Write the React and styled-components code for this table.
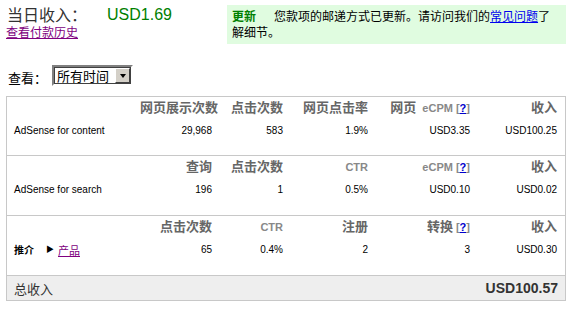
import styled, { createGlobalStyle } from 'styled-components';

const GlobalStyle = createGlobalStyle`
  body {
    margin: 0;
    background: #fff;
    font-family: "Liberation Sans", "Noto Sans CJK SC", sans-serif;
    color: #000;
  }
`;

const Page = styled.div`
  width: 572px;
  padding: 5px 6px 0 6px;
  box-sizing: border-box;
`;

const TopBar = styled.div`
  display: flex;
  justify-content: space-between;
  align-items: flex-start;
`;

const Earnings = styled.div`
  display: flex;
  flex-direction: column;
  padding-left: 1px;
`;

const TitleLine = styled.div`
  display: flex;
  align-items: center;
  height: 19px;
`;

const Title = styled.span`
  font-family: "Noto Sans CJK SC", sans-serif;
  font-size: 16px;
  line-height: 19px;
  color: #333;
  width: 100px;
`;

const Amount = styled.span`
  font-family: "Liberation Sans", sans-serif;
  font-size: 16px;
  line-height: 19px;
  color: #008000;
`;

const HistoryLink = styled.a`
  font-family: "Noto Sans CJK SC", sans-serif;
  font-size: 12px;
  line-height: 15px;
  color: #800080;
  text-decoration: underline;
  margin-left: -1px;
`;

const Notice = styled.div`
  width: 339px;
  height: 39px;
  box-sizing: border-box;
  background: #e0fce0;
  padding: 3px 6px 0 5px;
  font-family: "Noto Sans CJK SC", sans-serif;
  font-size: 12px;
  line-height: 16px;
`;

const NoticeTag = styled.b`
  color: #008000;
  margin-right: 18px;
`;

const BlueLink = styled.a`
  color: #0000ee;
  text-decoration: underline;
`;

const FilterRow = styled.div`
  display: flex;
  align-items: center;
  gap: 5px;
  margin-top: 21px;
  padding-left: 2px;
  font-family: "Noto Sans CJK SC", sans-serif;
  font-size: 13px;
`;

const FilterLabel = styled.span`
  line-height: 17px;
  padding-top: 4px;
`;

const FakeSelect = styled.div`
  display: flex;
  align-items: center;
  width: 81px;
  height: 21px;
  box-sizing: border-box;
  border: 2px solid;
  border-color: #808080 #fff #fff #808080;
  outline: 1px solid #404040;
  outline-offset: -3px;
  background: #fff;
`;

const SelectText = styled.span`
  flex: 1;
  padding-left: 3px;
  font-size: 13px;
  line-height: 17px;
`;

const SelectButton = styled.span`
  width: 15px;
  height: 15px;
  margin-right: 1px;
  background: #d4d0c8;
  border: 1px solid;
  border-color: #fff #404040 #404040 #fff;
  box-sizing: border-box;
  display: flex;
  align-items: center;
  justify-content: center;

  &::after {
    content: '';
    border-left: 3.5px solid transparent;
    border-right: 3.5px solid transparent;
    border-top: 4px solid #000;
  }
`;

const Report = styled.div`
  margin-top: 10px;
  border: 1px solid #c8c8c8;
`;

const Section = styled.div`
  display: grid;
  grid-template-columns: 126px 72px 71px 85px 102px 87px;
  grid-template-rows: 16px 14px;
  row-gap: 9px;
  padding: 2px 7px ${(p) => (p.$first ? 17 : 18)}px 7px;
  border-top: ${(p) => (p.$first ? 'none' : '1px solid #c8c8c8')};
`;

const Head = styled.div`
  text-align: right;
  font-family: "Noto Sans CJK SC", sans-serif;
  font-size: 13px;
  font-weight: bold;
  line-height: 16px;
  color: #666;
  white-space: nowrap;
`;

const Latin = styled.span`
  font-family: "Liberation Sans", sans-serif;
  font-size: 11px;
  font-weight: bold;
  color: #888;
  margin-left: ${(p) => p.$gap || 0}px;
`;

const HelpLink = styled.a`
  font-family: "Liberation Sans", sans-serif;
  font-size: 11px;
  font-weight: bold;
  color: #0000cc;
  text-decoration: underline;
`;

const Cell = styled.div`
  font-size: 10px;
  line-height: 14px;
  white-space: nowrap;
  display: flex;
  align-items: center;
  justify-content: ${(p) => (p.$left ? 'flex-start' : 'flex-end')};
`;

const ReferLabel = styled.b`
  font-family: "Noto Sans CJK SC", sans-serif;
  font-size: 10px;
  margin-right: 12px;
`;

const Arrow = styled.span`
  font-size: 8px;
  margin-right: 4px;
`;

const ProductLink = styled.a`
  font-family: "Noto Sans CJK SC", sans-serif;
  font-size: 11px;
  color: #800080;
  text-decoration: underline;
`;

const TotalRow = styled.div`
  display: flex;
  justify-content: space-between;
  align-items: center;
  height: 24px;
  padding: 0 7px;
  background: #eee;
  border-top: 1px solid #c8c8c8;
`;

const TotalLabel = styled.span`
  font-family: "Noto Sans CJK SC", sans-serif;
  font-size: 13px;
  color: #333;
`;

const TotalValue = styled.span`
  font-size: 14px;
  font-weight: bold;
  color: #333;
`;

const Help = () => (
  <>
    <Latin $gap={3}>[</Latin>
    <HelpLink href="#">?</HelpLink>
    <Latin>]</Latin>
  </>
);

const sections = [
  {
    heads: [
      '网页展示次数',
      '点击次数',
      '网页点击率',
      <>网页<Latin $gap={6}>eCPM</Latin><Help /></>,
      '收入',
    ],
    label: 'AdSense for content',
    values: ['29,968', '583', '1.9%', 'USD3.35', 'USD100.25'],
  },
  {
    heads: ['查询', '点击次数', <Latin>CTR</Latin>, <><Latin>eCPM</Latin><Help /></>, '收入'],
    label: 'AdSense for search',
    values: ['196', '1', '0.5%', 'USD0.10', 'USD0.02'],
  },
  {
    heads: ['点击次数', <Latin>CTR</Latin>, '注册', <>转换<Help /></>, '收入'],
    label: (
      <>
        <ReferLabel>推介</ReferLabel>
        <Arrow>▶</Arrow>
        <ProductLink href="#">产品</ProductLink>
      </>
    ),
    values: ['65', '0.4%', '2', '3', 'USD0.30'],
  },
];

export default function App() {
  return (
    <Page>
      <GlobalStyle />
      <TopBar>
        <Earnings>
          <TitleLine>
            <Title>当日收入：</Title>
            <Amount>USD1.69</Amount>
          </TitleLine>
          <HistoryLink href="#">查看付款历史</HistoryLink>
        </Earnings>
        <Notice>
          <NoticeTag>更新</NoticeTag>
          <span>您款项的邮递方式已更新。请访问我们的</span>
          <BlueLink href="#">常见问题</BlueLink>
          <span>了</span>
          <span>解细节。</span>
        </Notice>
      </TopBar>

      <FilterRow>
        <FilterLabel>查看：</FilterLabel>
        <FakeSelect>
          <SelectText>所有时间</SelectText>
          <SelectButton />
        </FakeSelect>
      </FilterRow>

      <Report>
        {sections.map((s, i) => (
          <Section key={i} $first={i === 0}>
            <div />
            {s.heads.map((h, j) => (
              <Head key={j}>{h}</Head>
            ))}
            <Cell $left>{s.label}</Cell>
            {s.values.map((v, j) => (
              <Cell key={j}>{v}</Cell>
            ))}
          </Section>
        ))}
        <TotalRow>
          <TotalLabel>总收入</TotalLabel>
          <TotalValue>USD100.57</TotalValue>
        </TotalRow>
      </Report>
    </Page>
  );
}
